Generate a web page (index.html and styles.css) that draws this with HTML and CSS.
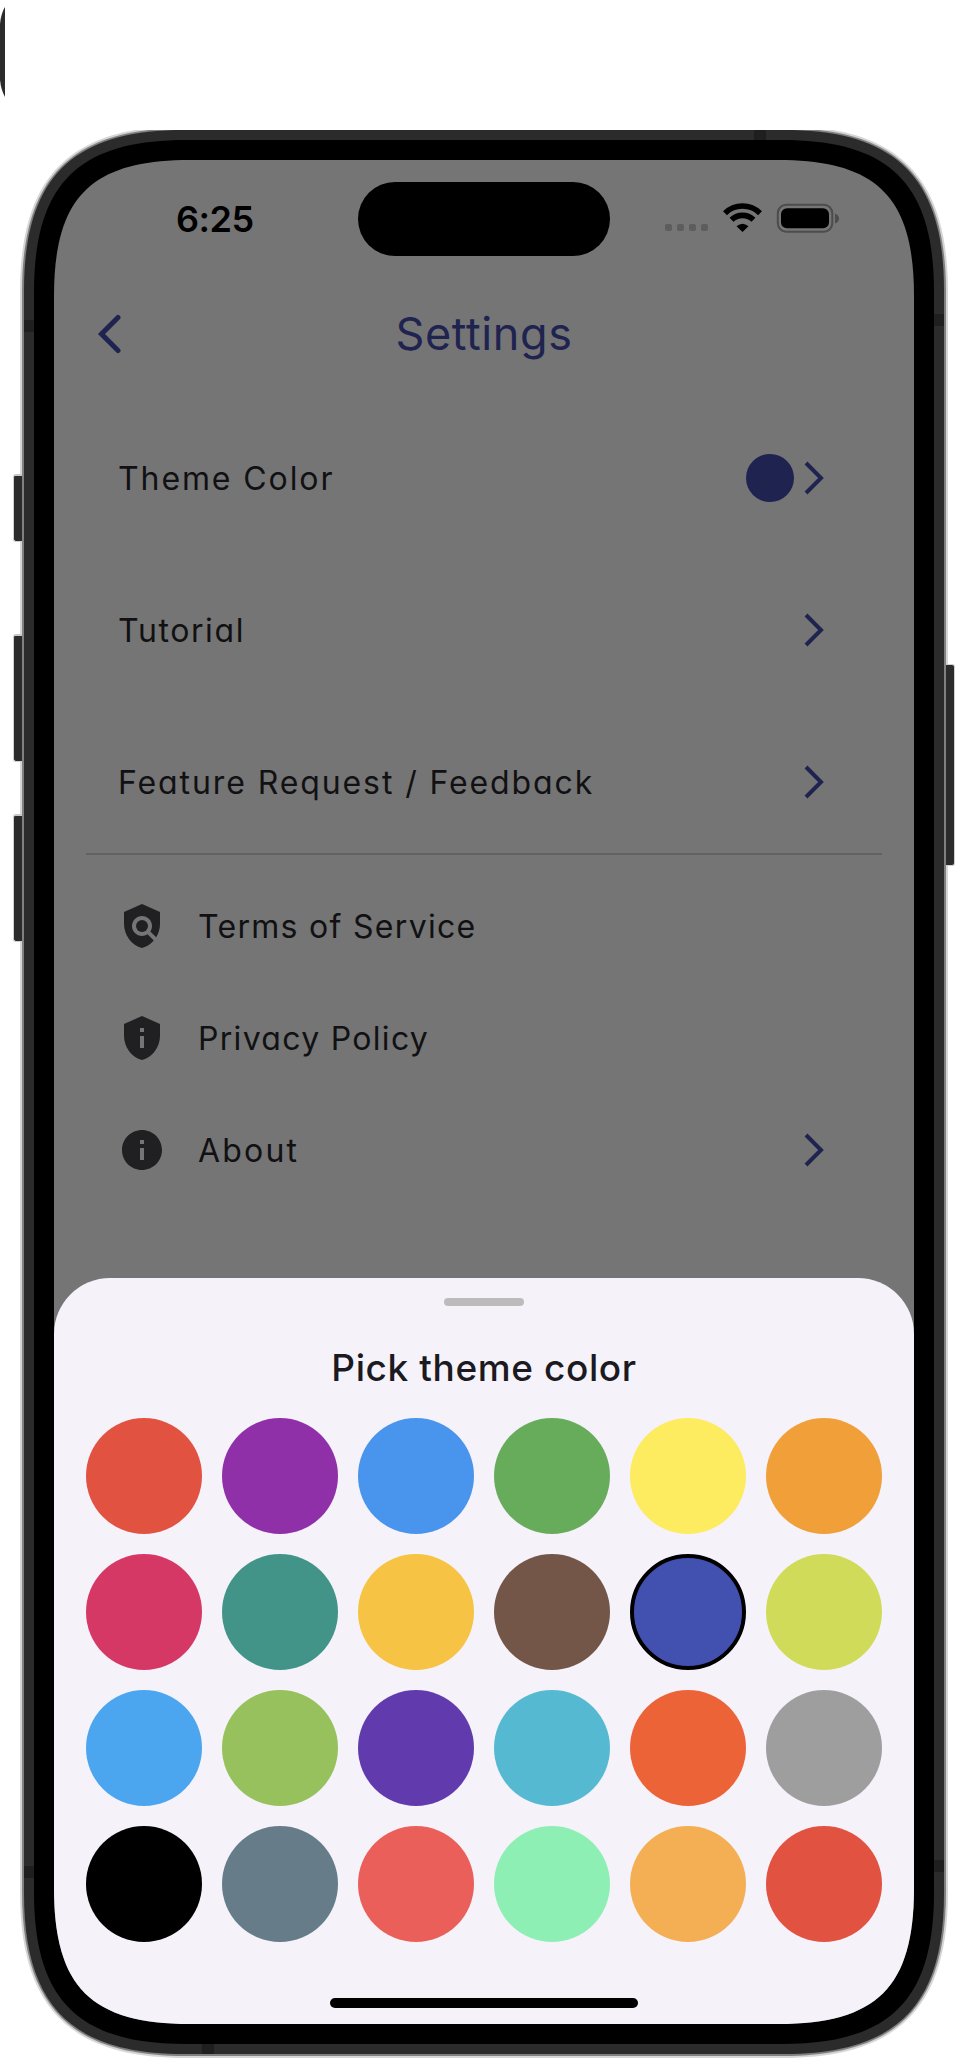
FILE: index.html
```html
<!DOCTYPE html>
<html lang="en">
<head>
<meta charset="utf-8">
<title>Settings</title>
<link rel="stylesheet" href="styles.css">
</head>
<body>
<div class="sliver"><svg width="5" height="104" viewBox="0 0 5 104"><path d="M5 7Q1 13 0 24V80Q1 90 5 97Z"/></svg></div>
<div class="phone">
  <svg class="shell" width="928" height="1928" viewBox="20 130 928 1928">
    <path fill="#d6d6d6" d="M186 126H782C898 126 948 176 948 292V1892C948 2008 898 2058 782 2058H186C70 2058 20 2008 20 1892V292C20 176 70 126 186 126Z"/>
    <path fill="#808080" d="M186 128H782C897 128 946 177 946 292V1892C946 2007 897 2056 782 2056H186C71 2056 22 2007 22 1892V292C22 177 71 128 186 128Z"/>
    <path fill="#2b2b2b" d="M184 130H784C896 130 944 178 944 290V1894C944 2006 896 2054 784 2054H184C72 2054 24 2006 24 1894V290C24 178 72 130 184 130Z"/>
    <path fill="#1f1f1f" d="M754 130h12v12h-12zM202 2042h12v12h-12zM24 320h12v12H24zM932 314h12v12h-12zM24 1866h12v12H24zM932 1860h12v12h-12z"/>
    <path d="M186 140H782C890 140 934 184 934 292V1892C934 2000 890 2044 782 2044H186C78 2044 34 2000 34 1892V292C34 184 78 140 186 140Z"/>
  </svg>
  <i class="key key-action"></i><i class="key key-up"></i><i class="key key-down"></i><i class="key key-power"></i>
  <main class="screen">
    <header class="status">
      <span class="time">6:25</span>
      <span class="island"></span>
      <svg class="indicators" width="176" height="32" viewBox="0 0 176 32">
        <g fill="#5d5d5d"><rect y="22" x="1" width="7" height="7" rx="2"/><rect x="13" y="22" width="7" height="7" rx="2"/><rect x="25" y="22" width="7" height="7" rx="2"/><rect x="37" y="22" width="7" height="7" rx="2"/></g>
        <g fill="none" stroke="#000" stroke-width="5.600"><path d="M61 11.200a24.900 24.900 0 0 1 35 0"/><path d="M67.500 17.800a15.800 15.800 0 0 1 22 0"/></g>
        <path d="M72.500 24.300q6-5 12 0L78.500 30z"/>
        <rect x="113.800" y="2.800" width="54.500" height="27" rx="8.500" fill="none" stroke="#4c4c4c" stroke-width="2"/>
        <rect x="117" y="6.300" width="48" height="20" rx="6"/>
        <path fill="#4c4c4c" d="M171 11.500q4 1.500 4 5t-4 5z"/>
      </svg>
    </header>
    <nav class="titlebar">
      <svg class="back" width="24" height="42" viewBox="0 0 24 42"><path d="M21 4.500L4.500 21L21 37.500"/></svg>
      <h1>Settings</h1>
    </nav>
    <section class="links">
      <a class="row"><span>Theme Color</span><i class="dot"></i><svg class="chev" width="20" height="34" viewBox="0 0 20 34"><path d="M2 2L17 17L2 32"/></svg></a>
      <a class="row"><span class="tutorial">Tutorial</span><svg class="chev" width="20" height="34" viewBox="0 0 20 34"><path d="M2 2L17 17L2 32"/></svg></a>
      <a class="row"><span>Feature Request / Feedback</span><svg class="chev" width="20" height="34" viewBox="0 0 20 34"><path d="M2 2L17 17L2 32"/></svg></a>
    </section>
    <section class="legal">
      <a class="row"><svg class="icon" width="48" height="48" viewBox="0 0 24 24"><path d="M21 5l-9-4-9 4v6c0 5.550 3.840 10.740 9 12 2.300-.56 4.330-1.900 5.880-3.710l-3.120-3.120c-1.940 1.290-4.580 1.070-6.290-.64-1.950-1.950-1.950-5.120 0-7.070s5.120-1.950 7.070 0c1.710 1.710 1.920 4.350.64 6.290l2.900 2.900C20.290 15.690 21 13.380 21 11V5z"/><circle cx="12" cy="12" r="3"/></svg><span>Terms of Service</span></a>
      <a class="row"><svg class="icon" width="48" height="48" viewBox="0 0 24 24"><path d="M12 1L3 5v6c0 5.550 3.840 10.740 9 12 5.160-1.260 9-6.450 9-12V5l-9-4zm-1 6h2v2h-2V7zm0 4h2v6h-2v-6z"/></svg><span>Privacy Policy</span></a>
      <a class="row"><svg class="icon" width="48" height="48" viewBox="0 0 24 24"><path d="M12 2C6.480 2 2 6.480 2 12s4.480 10 10 10 10-4.480 10-10S17.520 2 12 2zm1 15h-2v-6h2v6zm0-8h-2V7h2v2z"/></svg><span class="about">About</span><svg class="chev" width="20" height="34" viewBox="0 0 20 34"><path d="M2 2L17 17L2 32"/></svg></a>
    </section>
    <section class="sheet">
      <i class="grip"></i>
      <h2>Pick theme color</h2>
      <div class="swatches">
        <i class="red"></i><i class="purple"></i><i class="blue"></i><i class="green"></i><i class="yellow"></i><i class="orange"></i>
        <i class="pink"></i><i class="teal"></i><i class="amber"></i><i class="brown"></i><i class="indigo selected"></i><i class="lime"></i>
        <i class="sky"></i><i class="leaf"></i><i class="violet"></i><i class="cyan"></i><i class="ember"></i><i class="grey"></i>
        <i class="black"></i><i class="slate"></i><i class="coral"></i><i class="mint"></i><i class="apricot"></i><i class="red"></i>
      </div>
      <i class="home"></i>
    </section>
  </main>
</div>
</body>
</html>
```
FILE: styles.css
```css
* { box-sizing: border-box; }
body { margin: 0; height: 2060px; background: #fff; overflow: hidden; font-family: Inter, "Open Sans", sans-serif; font-feature-settings: "cv11"; }
i { display: block; font-style: normal; }
h1, h2 { margin: 0; font-weight: 400; }
.sliver { height: 130px; }
.sliver svg { display: block; fill: #2b2b2b; }
.phone { position: relative; width: 928px; height: 1928px; margin-left: 20px; padding: 30px 34px 0; }
.shell { position: absolute; left: 0; top: 0; }
.key { position: absolute; left: -7px; width: 9px; background: #2b2b2b; border: 1px solid #d0d0d0; border-top: 2px solid #c8c8c8; border-right: 0; border-radius: 3px 0 0 3px; }
.key-action { top: 344px; height: 68px; }
.key-up { top: 504px; height: 128px; }
.key-down { top: 684px; height: 128px; }
.key-power { left: 926px; top: 534px; height: 202px; border: 1px solid #d0d0d0; border-left: 0; border-radius: 0 3px 3px 0; }
.screen { position: relative; width: 860px; height: 1864px; display: flex; flex-direction: column; background: #757575; clip-path: path("M136 0H724C823 0 860 37 860 136V1728C860 1827 823 1864 724 1864H136C37 1864 0 1827 0 1728V136C0 37 37 0 136 0Z"); }
.status { height: 116px; display: flex; padding-top: 22px; flex: none; }
.time { width: 182px; margin-left: 122px; padding-top: 12px; font-size: 36px; font-weight: 600; line-height: 50px; letter-spacing: -0.5px; }
.island { width: 252px; height: 74px; border-radius: 37px; background: #000; }
.indicators { margin: 20px 0 0 54px; }
.titlebar { height: 120px; flex: none; display: flex; align-items: center; padding: 0 0 4px 43px; color: #1f2350; }
.back path { fill: none; stroke: #1f2350; stroke-width: 5; stroke-linecap: round; }
.titlebar h1 { width: 726px; text-align: center; font-size: 45px; line-height: 60px; letter-spacing: 0.6px; }
.links { height: 459px; flex: none; margin: 0 32px; border-bottom: 2px solid #626262; padding-top: 6px; }
.row { display: flex; align-items: center; color: #111113; font-size: 32px; line-height: 44px; letter-spacing: 1.9px; padding-left: 32px; padding-right: 58px; white-space: nowrap; }
.row span { padding-top: 2px; }
.row .tutorial { letter-spacing: 1.6px; }
.links .row { height: 152px; }
.dot { width: 48px; height: 48px; border-radius: 50%; background: #1f2350; margin-left: auto; margin-right: 10px; }
.chev { margin-left: auto; }
.dot + .chev { margin-left: 0; }
.chev path { fill: none; stroke: #1f2350; stroke-width: 4; }
.legal { margin: 15px 32px 0; flex: none; }
.legal .row { height: 112px; letter-spacing: 1.3px; }
.legal .row .about { letter-spacing: 2.2px; }
.icon { fill: #202022; margin-right: 32px; }
.sheet { position: absolute; left: 0; right: 0; top: 1118px; bottom: 0; border-radius: 56px 56px 0 0; background: #f5f2fa; padding-top: 20px; }
.grip { width: 80px; height: 8px; border-radius: 4px; background: #bcbcbc; margin: 0 auto; }
.sheet h2 { height: 112px; padding-top: 34px; line-height: 56px; font-size: 37px; font-weight: 550; text-align: center; letter-spacing: 0.6px; color: #1b1a20; }
.swatches { display: grid; grid-template-columns: repeat(6, 116px); grid-auto-rows: 116px; gap: 20px; margin-left: 32px; }
.swatches i { border-radius: 50%; }
.selected { border: 4px solid #000; }
.home { width: 308px; height: 10px; border-radius: 5px; background: #000; margin: 56px auto 0; }
.red { background: #e15241; }
.purple { background: #8f30a8; }
.blue { background: #4994ec; }
.green { background: #67ac5b; }
.yellow { background: #fdeb60; }
.orange { background: #f19f39; }
.pink { background: #d53864; }
.teal { background: #429488; }
.amber { background: #f6c344; }
.brown { background: #735648; }
.indigo { background: #4251af; }
.lime { background: #d0dc59; }
.sky { background: #4ba6ef; }
.leaf { background: #97c15c; }
.violet { background: #613bae; }
.cyan { background: #55b9d1; }
.ember { background: #ec6337; }
.grey { background: #9e9e9e; }
.black { background: #000; }
.slate { background: #667c89; }
.coral { background: #eb5f5a; }
.mint { background: #8eefb5; }
.apricot { background: #f4af55; }
```
